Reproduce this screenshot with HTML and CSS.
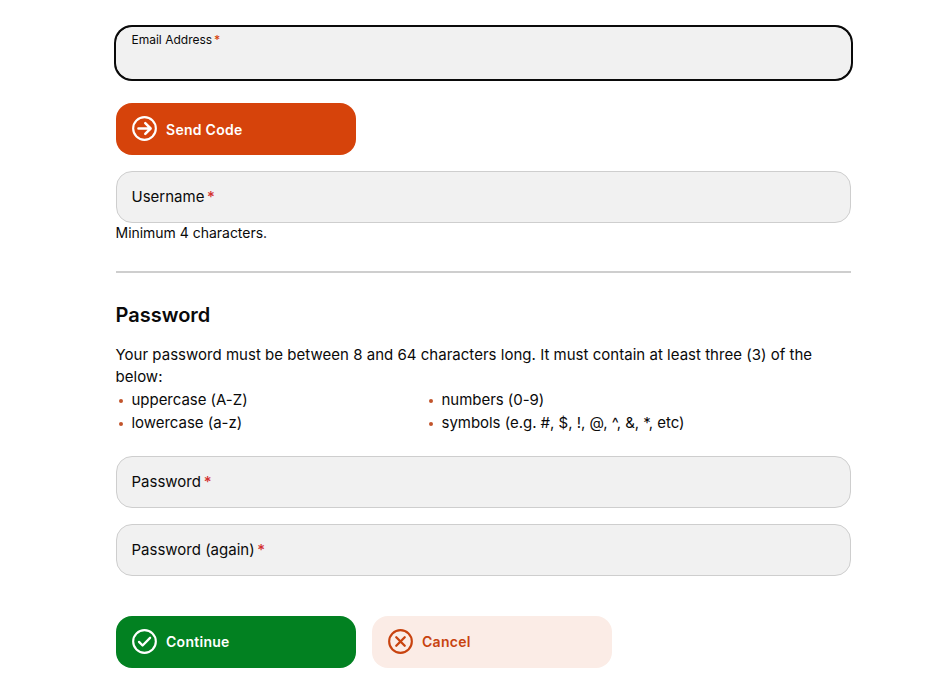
FILE: index.html
```html
<!DOCTYPE html>
<html lang="en">
<head>
  <meta charset="UTF-8">
  <meta name="viewport" content="width=device-width, initial-scale=1.0">
  <title>Create Account</title>
  <link rel="stylesheet" href="styles.css">
</head>
<body>
  <form class="signup-form">
    <div class="field field-active">
      <label for="email">Email Address <span class="required">*</span></label>
      <input type="email" id="email">
    </div>

    <button type="button" class="btn btn-send">
      <svg class="btn-icon" viewBox="0 0 26 26">
        <circle cx="13" cy="13" r="11.8" />
        <path class="thick" d="M6.7 13h12.4M13.8 7.4l5.6 5.6-5.6 5.6" />
      </svg>
      <span>Send Code</span>
    </button>

    <div class="field">
      <label for="username">Username <span class="required">*</span></label>
      <input type="text" id="username">
    </div>
    <p class="hint">Minimum 4 characters.</p>

    <hr class="divider">

    <h2>Password</h2>
    <p class="rules-intro">Your password must be between 8 and 64 characters long. It must contain at least three (3) of the below:</p>
    <ul class="rules">
      <li>uppercase (A-Z)</li>
      <li>numbers (0-9)</li>
      <li>lowercase (a-z)</li>
      <li>symbols (e.g. #, $, !, @, ^, &amp;, *, etc)</li>
    </ul>

    <div class="field">
      <label for="password">Password <span class="required">*</span></label>
      <input type="password" id="password">
    </div>
    <div class="field field-again">
      <label for="password-again">Password (again) <span class="required">*</span></label>
      <input type="password" id="password-again">
    </div>

    <div class="actions">
      <button type="button" class="btn btn-continue">
        <svg class="btn-icon" viewBox="0 0 26 26">
          <circle cx="13" cy="13" r="11.8" />
          <path d="M7.3 13.4l3.7 3.8 7.8-8" />
        </svg>
        <span>Continue</span>
      </button>
      <button type="button" class="btn btn-cancel">
        <svg class="btn-icon" viewBox="0 0 26 26">
          <circle cx="13" cy="13" r="11.8" />
          <path d="M8.6 8.6l8.8 8.8M17.4 8.6l-8.8 8.8" />
        </svg>
        <span>Cancel</span>
      </button>
    </div>
  </form>
</body>
</html>
```
FILE: styles.css
```css
* {
  margin: 0;
  padding: 0;
  box-sizing: border-box;
}

body {
  font-family: Inter, "Liberation Sans", sans-serif;
  font-size: 15px;
  line-height: 22.5px;
  color: #0a0a0a;
  background: #fff;
}

.signup-form {
  width: 735px;
  margin-left: 116px;
  padding-top: 27px;
}

/* Fields */
.field {
  position: relative;
  display: flex;
  align-items: center;
  height: 52px;
  padding: 0 14.5px;
  background: #f1f1f1;
  border: 1px solid #cecece;
  border-radius: 16px;
}

/* The input fills the box, under its label */
.field input {
  position: absolute;
  inset: 0;
  padding: 14px 15px 0;
  font: inherit;
  background: transparent;
  border: none;
  outline: none;
}

.field-active {
  align-items: flex-start;
  padding-top: 3px;
  margin-bottom: 24px;
  font-size: 12px;
  line-height: 18px;
  border-color: #f1f1f1;
  box-shadow: 0 0 0 2px #0a0a0a;
}

.required {
  margin-left: -1.5px;
  font-weight: 500;
  color: #d32f2f;
}

.field-active .required {
  color: #d6430b;
}

.hint {
  margin: -1px 0 0 -0.5px;
  font-size: 14px;
  line-height: 21px;
  letter-spacing: -0.02px;
}

/* Buttons */
.btn {
  display: flex;
  align-items: center;
  gap: 9px;
  width: 240px;
  height: 52px;
  padding: 0 16px;
  font: 600 14px/20px Inter, "Liberation Sans", sans-serif;
  letter-spacing: 0.28px;
  color: #fff;
  border: none;
  border-radius: 16px;
  cursor: pointer;
}

.btn-icon {
  width: 25px;
  height: 25px;
  margin-bottom: 1px;
  fill: none;
  stroke: currentColor;
  stroke-width: 2.2;
  stroke-linecap: round;
  stroke-linejoin: round;
}

.btn-icon path {
  stroke-width: 2.4;
}

.btn-icon .thick {
  stroke-width: 2.6;
}

.btn-send {
  margin-bottom: 16px;
  background: #d6430b;
}

.btn-send span {
  padding-top: 1px;
}

.btn-continue {
  background: #028121;
}

.btn-cancel {
  color: #c8430f;
  background: #fbece6;
}

/* Password section */
.divider {
  height: 2px;
  margin: 28px 0 29px;
  background: #cecece;
  border: none;
}

h2 {
  margin: 0 0 16px -0.5px;
  font-size: 20px;
  line-height: 26px;
  font-weight: 600;
}

.rules-intro {
  margin-left: -0.5px;
  line-height: 22px;
  letter-spacing: 0.022px;
}

.rules {
  display: grid;
  grid-template-columns: 310px 1fr;
  margin-bottom: 22px;
  list-style: none;
}

.rules li {
  display: flex;
  align-items: center;
  line-height: 23px;
  letter-spacing: -0.03px;
}

.rules li::before {
  content: "";
  width: 4px;
  height: 4px;
  margin: 2px 8.5px 0 3px;
  background: #c2542b;
  border-radius: 50%;
}

.field-again {
  margin-top: 16px;
}

.actions {
  display: flex;
  gap: 16px;
  margin-top: 40px;
}
```
